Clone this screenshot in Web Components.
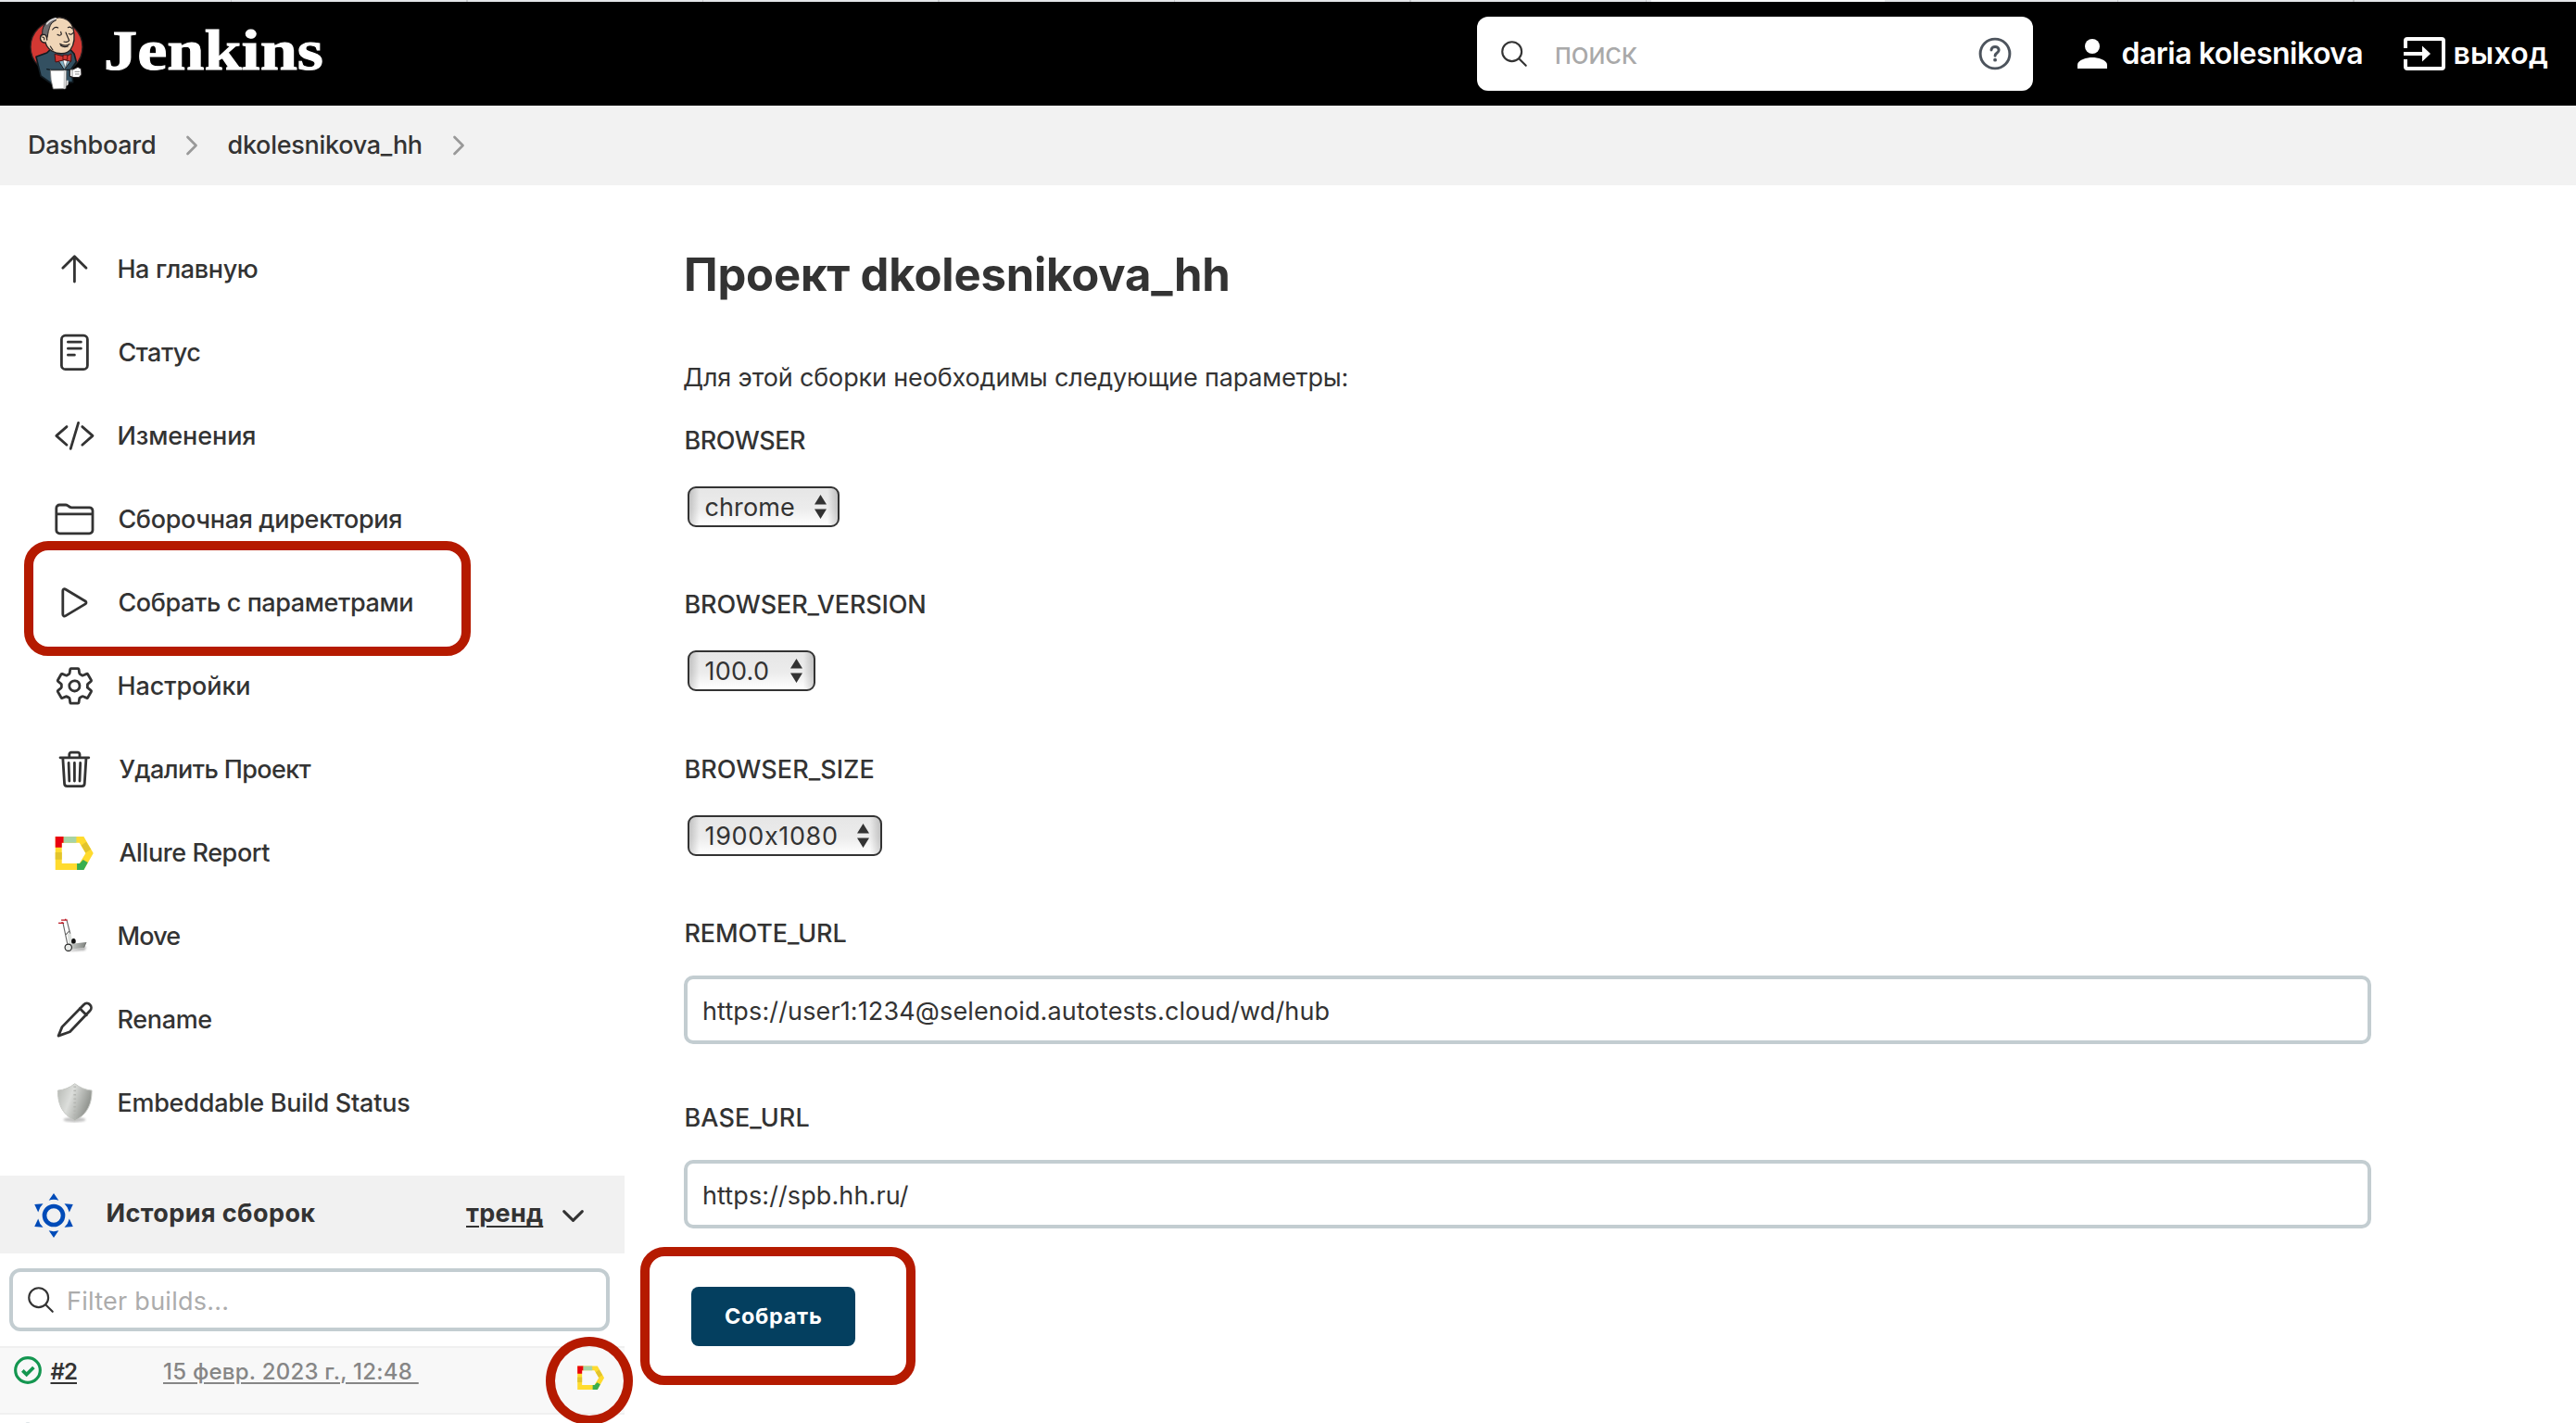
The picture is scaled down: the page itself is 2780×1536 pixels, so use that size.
<!DOCTYPE html>
<html lang="ru">
<head>
<meta charset="utf-8">
<title>dkolesnikova_hh [Jenkins]</title>
<style>
html,body{margin:0;padding:0}
body{position:relative;width:2780px;height:1536px;overflow:hidden;background:#fff;color:#333;font-family:Inter,"Noto Sans",sans-serif;font-size:27px;line-height:40px}
.cols{display:flex;align-items:flex-start}
</style>
</head>
<body>
<j-header></j-header>
<j-crumbs></j-crumbs>
<div class="cols">
  <j-sidebar>
    <j-task icon="up" w="149.5">На главную</j-task>
    <j-task icon="doc" w="88">Статус</j-task>
    <j-task icon="code" w="147">Изменения</j-task>
    <j-task icon="folder" w="305">Сборочная директория</j-task>
    <j-task icon="play" w="317">Собрать с параметрами</j-task>
    <j-task icon="gear" w="141">Настройки</j-task>
    <j-task icon="trash" w="207.5">Удалить Проект</j-task>
    <j-task icon="allure" w="163">Allure Report</j-task>
    <j-task icon="truck" w="66">Move</j-task>
    <j-task icon="pencil" w="100">Rename</j-task>
    <j-task icon="shield" w="314">Embeddable Build Status</j-task>
    <j-history slot="history"></j-history>
  </j-sidebar>
  <j-main></j-main>
</div>
<j-mark style="left:26px;top:584px;width:482px;height:124px;border-radius:26px"></j-mark>
<j-mark style="left:691px;top:1346px;width:297px;height:149px;border-radius:26px"></j-mark>
<j-mark style="left:589px;top:1443px;width:94px;height:95px;border-radius:50%"></j-mark>

<script>
const ctx = document.createElement('canvas').getContext('2d');

/* Text whose inked width is set with the w attribute. */
class InkText extends HTMLElement {
  connectedCallback() {
    if (this.shadowRoot) return;
    this.attachShadow({mode:'open'}).innerHTML = `<style>
      :host{display:block;white-space:pre;flex:none}
      span{display:inline-block}
      :host([u]) span{text-decoration:underline;text-decoration-thickness:2px;text-underline-offset:var(--uo,4px)}
      </style><span><slot></slot></span>`;
    const w = +this.getAttribute('w');
    const t = this.textContent.replace(/[\s\u00a0]+$/, '');
    const cs = getComputedStyle(this);
    ctx.font = `${cs.fontWeight} ${cs.fontSize} ${cs.fontFamily}`;
    ctx.letterSpacing = '0.01px';
    const m = ctx.measureText(t);
    const ls = (w - (m.actualBoundingBoxRight + m.actualBoundingBoxLeft)) / (t.length - 1);
    const s = this.shadowRoot.querySelector('span');
    s.style.letterSpacing = ls.toFixed(3) + 'px';
    s.style.marginLeft = m.actualBoundingBoxLeft.toFixed(2) + 'px';
    this.style.width = w + 'px';
  }
}
customElements.define('ink-text', InkText);

const ion = b => `<svg viewBox="0 0 512 512" fill="none" stroke="currentColor" stroke-width="32" stroke-linecap="round" stroke-linejoin="round">${b}</svg>`;
const own = b => `<svg viewBox="-67.2 -67.2 134.4 134.4">${b}</svg>`;
const ICONS = {
  up: ion('<path d="M112 244l144-144 144 144M256 120v292"/>'),
  doc: ion('<rect x="96" y="48" width="320" height="416" rx="48"/><path d="M176 128h160M176 208h160M176 288h80"/>'),
  code: ion('<path d="M160 368L32 256l128-112M352 368l128-112-128-112M304 96l-96 320"/>'),
  folder: ion('<path d="M440 432H72a40 40 0 01-40-40V120a40 40 0 0140-40h75.89a40 40 0 0122.19 6.72l27.84 18.56a40 40 0 0022.19 6.72H440a40 40 0 0140 40v240a40 40 0 01-40 40zM32 192h448"/>'),
  play: ion('<path d="M112 111v290c0 17.44 17 28.52 31 20.16l247.9-148.37c12.12-7.25 12.12-26.33 0-33.58L143 90.84c-14-8.36-31 2.72-31 20.16z"/>'),
  gear: ion('<path d="M262.29 192.31a64 64 0 1057.4 57.4 64.13 64.13 0 00-57.4-57.4zM416.39 256a154.34 154.34 0 01-1.53 20.79l45.21 35.46a10.81 10.81 0 012.45 13.75l-42.77 74a10.81 10.81 0 01-13.14 4.59l-44.9-18.08a16.11 16.11 0 00-15.17 1.75A164.48 164.48 0 01325 400.8a15.94 15.94 0 00-8.82 12.14l-6.73 47.89a11.08 11.08 0 01-10.68 9.17h-85.54a11.11 11.11 0 01-10.69-8.87l-6.72-47.82a16.07 16.07 0 00-9-12.22 155.3 155.3 0 01-21.46-12.57 16 16 0 00-15.11-1.71l-44.89 18.07a10.81 10.81 0 01-13.14-4.58l-42.77-74a10.8 10.8 0 012.45-13.75l38.21-30a16.05 16.05 0 006-14.08c-.36-4.17-.58-8.33-.58-12.5s.21-8.27.58-12.35a16 16 0 00-6.07-13.94l-38.19-30A10.81 10.81 0 0149.48 186l42.77-74a10.81 10.81 0 0113.14-4.59l44.9 18.08a16.11 16.11 0 0015.17-1.75A164.48 164.48 0 01187 111.2a15.94 15.94 0 008.82-12.14l6.73-47.89A11.08 11.08 0 01213.23 42h85.54a11.11 11.11 0 0110.69 8.87l6.72 47.82a16.07 16.07 0 009 12.22 155.3 155.3 0 0121.46 12.57 16 16 0 0015.11 1.71l44.89-18.07a10.81 10.81 0 0113.14 4.58l42.77 74a10.8 10.8 0 01-2.45 13.75l-38.21 30a16.05 16.05 0 00-6.05 14.08c.33 4.14.55 8.3.55 12.47z"/>'),
  trash: ion('<path d="M112 112l20 320c.95 18.49 14.4 32 32 32h184c17.67 0 30.87-13.51 32-32l20-320M80 112h352M192 112V72a23.93 23.93 0 0124-24h80a23.93 23.93 0 0124 24v40M256 176v224M184 176l8 224M328 176l-8 224"/>'),
  search: ion('<path d="M221.09 64a157.09 157.09 0 10157.09 157.09A157.1 157.1 0 00221.09 64zM338.29 338.29L448 448"/>'),
  down: ion('<path d="M112 184l144 144 144-144" stroke-width="44"/>'),
  chevron: ion('<path d="M184 112l144 144-144 144" stroke-width="44"/>'),
  pencil: own('<path d="M-52 53L-40 24 30-48A14 14 0 0150-28L-15 40ZM17-36L39-14" fill="none" stroke="#333" stroke-width="8.4" stroke-linejoin="round" stroke-linecap="round"/>'),
  allure: own(`<path fill="#ffdb2e" fill-rule="evenodd" d="M-62-52H30L61 2 30 56H-62ZM-41-32V35H16L36 2 16-32Z"/>
    <path fill="#e9000f" d="M-62-52h27v20h-6v15h-21z"/><path fill="#a6d3a6" d="M-35-52H6v20h-41z"/>
    <path fill="#e2c42c" d="M-62-1h21v23h-21zM22-24L38-35 53-11 36 0z"/><path fill="#38ae4f" d="M8 35h9l11-12 15 9L30 56H8z"/>`),
  truck: own(`<defs><filter id="b"><feGaussianBlur stdDeviation="3"/></filter><linearGradient id="g"><stop offset="0" stop-color="#cfd2cf"/><stop offset="1" stop-color="#7d817d"/></linearGradient></defs>
    <path d="M-30 42L34 38 38 26-5 36Z" fill="#777" opacity=".6" filter="url(#b)" transform="translate(0 8)"/>
    <path d="M-23-6L-12-12-6 24-18 28Z" fill="#dfe2df"/>
    <path d="M-25-51L-14-8M-37-41L-23 25M-29-4L-15-18" stroke="#666" stroke-width="3.4" fill="none"/>
    <ellipse cx="-3" cy="17" rx="7" ry="9" fill="#111"/>
    <path d="M-16 26L38 20 31 37-10 43Z" fill="url(#g)"/><path d="M38 20L31 37" stroke="#555" stroke-width="2"/>
    <circle cx="-20" cy="37" r="11" fill="#e9ebe9" stroke="#222" stroke-width="3.4"/>
    <path d="M-43-52h20M-52-42h18M-29-56v6M-40-46v6" stroke="#b8101c" stroke-width="3.4"/>`),
  shield: own(`<defs><filter id="b"><feGaussianBlur stdDeviation="3"/></filter><linearGradient id="g" x1="0" y1="0" x2="1" y2=".4"><stop offset="0" stop-color="#b4b7b2"/><stop offset=".45" stop-color="#dcdedb"/><stop offset="1" stop-color="#8f928d"/></linearGradient></defs>
    <ellipse cx="0" cy="55" rx="36" ry="8" fill="#888" opacity=".5" filter="url(#b)"/>
    <path d="M1-62C18-49 35-42 56-40 56 0 45 35 1 58-43 35-54 0-54-40-33-42-16-49 1-62Z" fill="url(#g)" stroke="#c6c8c4" stroke-width="3"/>
    <path d="M1-54V52" stroke="#b3b5b1" stroke-width="8" stroke-dasharray="4 9"/>`),
  sun: `<svg viewBox="-72 -72 144 144" fill="#004bb8"><circle r="30" fill="none" stroke="#004bb8" stroke-width="14"/>
    ${[0,60,120,180,240,300].map(a=>`<path d="M0-72L16-49Q0-54-16-49Z" transform="rotate(${a})"/>`).join('')}</svg>`,
  help: '<svg viewBox="0 0 512 512" fill="none" stroke="#4d545d" stroke-width="40" stroke-linecap="round"><circle cx="256" cy="256" r="214"/><path d="M202 202c0-30 26-48 55-48 31 0 55 20 55 47 0 26-18 36-34 48-14 10-21 20-21 38" /><circle cx="257" cy="346" r="26" fill="#4d545d" stroke="none"/></svg>',
  user: '<svg viewBox="0 0 32 32" fill="#fff"><circle cx="16" cy="8" r="8"/><path d="M0 32v-4c0-5.500 10.500-8 16-8s16 2.500 16 8v4z"/></svg>',
  exit: '<svg viewBox="0 0 45 36" fill="none" stroke="#fff" stroke-width="4"><path d="M2 12V4a2 2 0 012-2H41a2 2 0 012 2V32a2 2 0 01-2 2H4a2 2 0 01-2-2V24M0 18H22"/><path d="M20 9.500L29 18l-9 8.500z" fill="#fff" stroke="none"/></svg>',
  ok: '<svg viewBox="0 0 90 90" fill="none" stroke="#149650"><circle cx="45" cy="45" r="40" stroke-width="9.500"/><path d="M28 46L41 59 64 36" stroke-width="11"/></svg>',
  updown: '<svg viewBox="0 0 13 26" fill="#333"><path d="M6.500 0L13 10.500H0zM6.500 26L13 15.500H0z"/></svg>'
};
class JIcon extends HTMLElement {
  connectedCallback() {
    if (this.shadowRoot) return;
    this.attachShadow({mode:'open'}).innerHTML = `<style>:host{display:block;flex:none}svg{display:block;width:100%;height:100%;overflow:visible}</style>${ICONS[this.getAttribute('name')]}`;
  }
}
customElements.define('j-icon', JIcon);

function define(name, html) {
  customElements.define(name, class extends HTMLElement {
    connectedCallback() {
      if (this.shadowRoot) return;
      this.attachShadow({mode:'open'}).innerHTML = typeof html === 'function' ? html(this) : html;
    }
  });
}

define('j-mark', '<style>:host{display:block;position:absolute;box-sizing:border-box;border:10px solid #b51a00}</style>');

define('j-logo', `<style>:host{display:flex;align-items:flex-start;flex:none}svg{display:block;overflow:visible}</style>
<svg width="94" height="100" viewBox="0 0 282 300" stroke-linejoin="round" stroke-linecap="round">
  <circle cx="123" cy="122" r="84" fill="#d33833" stroke="#2b2020" stroke-width="4"/>
  <path d="M57 154L92 141 106 128 165 128 180 144 187 170 172 192 176 236 110 243 72 216Z" fill="#335061" stroke="#101a20" stroke-width="5"/>
  <path d="M84 98C68 102 67 78 84 80 70 55 92 36 120 28 150 20 172 42 177 62 183 88 182 112 168 131 156 146 128 147 108 135 92 126 88 112 84 98Z" fill="#f0d6b7" stroke="#231f20" stroke-width="4"/>
  <path d="M78 84C72 58 90 38 116 29L122 35C99 46 102 60 97 70L93 92C88 94 86 80 78 84Z" fill="#6d6b6d" stroke="#231f20" stroke-width="3"/>
  <path d="M92 47Q102 34 120 30" stroke="#d8d6d6" stroke-width="6" fill="none"/>
  <path d="M85 108C68 110 64 80 84 82 90 84 92 92 92 99" fill="#f0d6b7" stroke="#231f20" stroke-width="4"/>
  <path d="M77 90q8 0 6 9M110 66q8-12 18-6M160 59q8-5 14 4M126 82q8 6 13-1l-2-8M163 79q7 6 13-2M153 75l11 26q-6 8-17 4M134 112q16 10 31 1M136 117q10 8 24 3M103 120l8 12" fill="none" stroke="#231f20" stroke-width="3.500"/>
  <path d="M128 165L148 196 171 165 160 160 140 160Z" fill="#81b0c4" stroke="#231f20" stroke-width="3"/>
  <path d="M143 162L151 190 160 162Z" fill="#fff" stroke="#555" stroke-width="2"/>
  <path d="M151 154L117 145 120 171 148 164 170 169 171 145Z" fill="#d33833" stroke="#501010" stroke-width="3"/>
  <path d="M145 148h13v15h-13z" fill="#d33833" stroke="#501010" stroke-width="2.500"/>
  <path d="M103 196L92 194M103 196H168" stroke="#101a20" stroke-width="4"/>
  <path d="M166 195L176 195 192 187 203 193 204 212 196 221 176 220 166 217Z" fill="#fff" stroke="#231f20" stroke-width="3.500"/>
  <path d="M174 195v22M183 202l14 0M184 210h12" stroke="#777" stroke-width="2.500" fill="none"/>
  <path d="M152 230h9v14l-7 6z" fill="#ddd"/>
  <path d="M103 198L155 198 153 257 112 258Q103 230 103 198Z" fill="#fff" stroke="#777" stroke-width="2.500"/>
  <path d="M149 200L148 256" stroke="#ccc" stroke-width="5"/>
</svg>
<svg width="236" height="80" viewBox="0 0 236 80"><text x="-2" y="65" textLength="237" lengthAdjust="spacingAndGlyphs" font-family="Liberation Serif" font-weight="700" font-size="62" fill="#fff" stroke="#fff" stroke-width="1">Jenkins</text></svg>`);

define('j-header', `<style>
:host{display:block}
.tabs{height:2px;background:linear-gradient(90deg,transparent 1782px,#f8f9fa 1782px 2034px,transparent 2034px),repeating-linear-gradient(90deg,#e4e6e9 0 253px,#c9cbce 253px 254.500px) -4px 0}
.bar{display:flex;align-items:center;height:112px;background:#000;padding:0 31px 0 20px;box-sizing:border-box;color:#fff;font-weight:600;font-size:32px}
j-logo{height:96px;margin-right:auto}
.search{display:flex;align-items:center;box-sizing:border-box;width:600px;height:80px;border-radius:12px;background:#fff;color:#333;padding:0 22px 0 23px;font-weight:400;margin-right:48px}
.search ink-text{color:#a9a9a9;margin-left:29px;margin-right:auto}
</style>
<div class="tabs"></div>
<div class="bar"><j-logo></j-logo>
<div class="search"><j-icon name="search" style="width:34px;height:34px"></j-icon><ink-text w="87">поиск</ink-text><j-icon name="help" style="width:38px;height:38px"></j-icon></div>
<j-icon name="user" style="width:32px;height:32px;margin-right:17px"></j-icon><ink-text w="259">daria kolesnikova</ink-text>
<j-icon name="exit" style="width:45px;height:36px;margin:0 11px 0 44px"></j-icon><ink-text w="99.5">выход</ink-text></div>`);

define('j-crumbs', `<style>:host{display:flex;align-items:center;height:86px;box-sizing:border-box;padding:0 0 1px 32px;background:#f2f2f2;font-weight:500}
j-icon{width:32px;height:32px;color:#999}</style>
<ink-text w="135">Dashboard</ink-text><j-icon name="chevron" style="margin:1px 24px 0 23.500px"></j-icon><ink-text w="208.500">dkolesnikova_hh</ink-text><j-icon name="chevron" style="margin:1px 0 0 23.500px"></j-icon>`);

define('j-task', e => `<style>:host{display:flex;align-items:center;height:90px;font-weight:500}
j-icon{width:44.800px;height:44.800px;margin:.6px 25.600px 0 58px}ink-text{margin-top:2px}</style>
<j-icon name="${e.getAttribute('icon')}"></j-icon><ink-text w="${e.getAttribute('w')}">${e.textContent}</ink-text>`);

define('j-sidebar', `<style>:host{display:block;width:674px;flex:none;padding-top:45px}nav{margin-bottom:34px}</style><nav><slot></slot></nav><slot name="history"></slot>`);

define('j-history', `<style>
:host{display:block}
.head{display:flex;align-items:center;height:84px;background:#f1f1f1;font-weight:700;padding:2px 0 4px 33.500px;box-sizing:border-box}
.filter{display:flex;align-items:center;box-sizing:border-box;width:648px;height:68px;border:4px solid #c3cdd1;border-radius:12px;margin:16px 0 16px 10px;padding-left:13px;color:#333}
.filter ink-text{color:#acacac;margin:4px 0 0 13px}
.row{display:flex;align-items:flex-start;box-sizing:border-box;height:74px;border-top:2px solid #f0f0f0;border-bottom:2px solid #f0f0f0;background:#f8f8f8;font-size:24px;font-weight:500;line-height:40px;padding-left:15px;--uo:3px}
.row ink-text{margin-top:6px}
.next{height:9px;overflow:hidden;padding:8px 0 0 27px}
.next i{display:block;width:6px;height:4px;border-radius:3px 3px 0 0;background:#dde3e6}
</style>
<div class="head"><j-icon name="sun" style="width:48px;height:48px;margin:4px 34px 0 0"></j-icon><ink-text w="225">История сборок</ink-text><ink-text u w="83" style="margin-left:162.500px">тренд</ink-text><j-icon name="down" style="width:35px;height:35px;margin:4px 0 0 14.500px"></j-icon></div>
<div class="filter"><j-icon name="search" style="width:34px;height:34px"></j-icon><ink-text w="171.500">Filter builds...</ink-text></div>
<div class="row"><j-icon name="ok" style="width:30px;height:30px;margin:9px 9.500px 0 0"></j-icon><ink-text u w="28.500" style="font-weight:600">#2</ink-text><ink-text u w="267.500" style="color:#868686;margin-left:94px">15 февр. 2023 г., 12:48&nbsp;</ink-text><j-icon name="allure" style="width:31.500px;height:31.500px;margin:16px 0 0 177.500px"></j-icon></div>
<div class="next"><i></i></div>`);

define('j-select', `<style>:host{display:inline-flex;align-items:center;box-sizing:border-box;height:44px;border:2px solid #333;border-radius:9px;margin:30px 0 0 4px;padding:0 12px 0 17.500px;gap:22px;background:linear-gradient(90deg,rgba(0,0,0,.17),transparent 11px,transparent calc(100% - 11px),rgba(0,0,0,.17)),linear-gradient(#e6e6e6,#ececec 55%,#fff)}
j-icon{width:13px;height:26px}</style><slot></slot><j-icon name="updown"></j-icon>`);

define('j-field', `<style>:host{display:flex;align-items:center;box-sizing:border-box;width:1821px;height:74px;border:4px solid #c3cdd1;border-radius:10px;margin-top:26px;padding:3px 0 0 18px}</style><slot></slot>`);

define('j-param', e => `<style>:host{display:block;box-sizing:border-box}ink-text{font-weight:500;margin-left:2.500px}.lab{height:39px;padding-top:1px}</style>
<div class="lab"><ink-text w="${e.getAttribute('w')}">${e.getAttribute('label')}</ink-text></div><slot></slot>`);

define('j-main', `<style>
:host{display:block;margin-left:64px;padding-top:67px}
h1{margin:0 0 61px 3px;font-size:49px;line-height:60px;font-weight:700}
.intro{margin-bottom:27px}
j-param{height:177px}
j-select ink-text{margin-top:1px}
button{display:flex;align-items:center;justify-content:center;width:177px;height:64px;border:0;border-radius:8px;background:#043f5f;color:#fff;font:700 23.500px/40px Inter,sans-serif;margin:0 0 0 8px;padding:0}
</style>
<h1><ink-text w="584.500">Проект dkolesnikova_hh</ink-text></h1>
<div class="intro"><ink-text w="716">Для этой сборки необходимы следующие параметры:</ink-text></div>
<j-param label="BROWSER" w="128.500"><j-select><ink-text w="95.500">chrome</ink-text></j-select></j-param>
<j-param label="BROWSER_VERSION" w="258" style="height:178px"><j-select style="gap:24px"><ink-text w="67.500">100.0</ink-text></j-select></j-param>
<j-param label="BROWSER_SIZE" w="202"><j-select><ink-text w="141.500">1900x1080</ink-text></j-select></j-param>
<j-param label="REMOTE_URL" w="173" style="height:199px"><j-field><ink-text w="675">https://user1:1234@selenoid.autotests.cloud/wd/hub</ink-text></j-field></j-param>
<j-param label="BASE_URL" w="133" style="height:203px"><j-field><ink-text w="221">https://spb.hh.ru/</ink-text></j-field></j-param>
<button><ink-text w="103">Собрать</ink-text></button>`);
</script>
</body>
</html>
